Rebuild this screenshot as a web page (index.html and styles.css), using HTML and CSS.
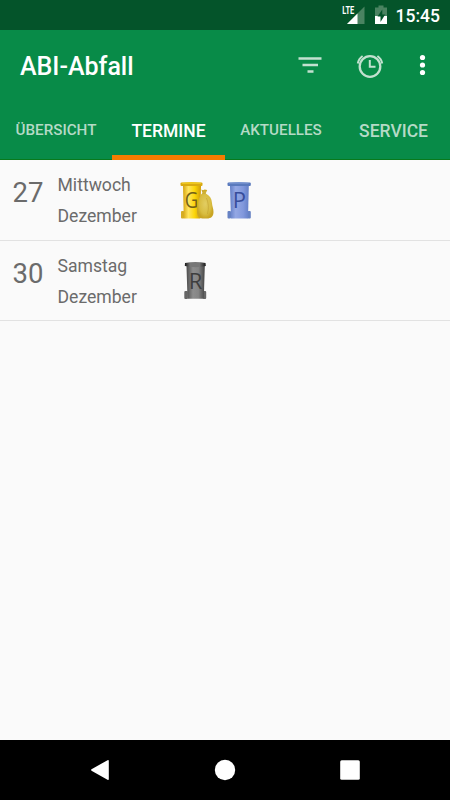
FILE: index.html
```html
<!DOCTYPE html>
<html lang="de">
<head>
<meta charset="utf-8">
<title>ABI-Abfall</title>
<link rel="stylesheet" href="styles.css">
</head>
<body>
<div class="screen">
  <div class="status">
    <svg class="status-icons" width="54" height="30" viewBox="0 0 54 30">
      <path d="M28.500 6.500v17.500H11z" fill="#4a8361"/>
      <path d="M21.500 13.500V24H11z" fill="#fff"/>
      <text class="lte" x="6.300" y="14" textLength="12" lengthAdjust="spacingAndGlyphs">LTE</text>
      <path d="M39 7.500h3.500V5.500h5v2H51v9H39z" fill="#4a8361"/>
      <path d="M39 16h12v8H39z" fill="#fff"/>
      <path d="M46.300 9.500l-4.800 7h3v5.500l4.700-7.500h-2.900z" fill="#04542a"/>
    </svg>
    <span class="clock">15:45</span>
  </div>
  <header class="bar">
    <h1>ABI-Abfall</h1>
    <svg class="actions" width="150" height="70" viewBox="0 0 150 70">
      <g fill="#c2e1cf">
        <path d="M-1.500 27.300h23v2.500h-23zM2.500 33.800h15.500v2.500H2.500zM7.500 40.200h6v2.500h-6z"/>
      </g>
      <g fill="none" stroke="#c2e1cf">
        <circle cx="70" cy="36.500" r="10.300" stroke-width="2.300"/>
        <path d="M69.800 30v6.700h5.700" stroke-width="2"/>
        <path d="M57.800 33.500c.5-3.200 2.200-5.700 4.800-7.500M82.200 33.500c-.5-3.200-2.200-5.700-4.800-7.500" stroke-width="2"/>
      </g>
      <g fill="#fff"><circle cx="122.500" cy="27.500" r="2.600"/><circle cx="122.500" cy="35" r="2.600"/><circle cx="122.500" cy="42.500" r="2.600"/></g>
    </svg>
  </header>
  <nav class="tabs">
    <span class="tab small">ÜBERSICHT</span>
    <span class="tab active">TERMINE</span>
    <span class="tab small">AKTUELLES</span>
    <span class="tab">SERVICE</span>
  </nav>
  <main class="list">
    <div class="row">
      <span class="day">27</span>
      <div class="date"><span>Mittwoch</span><span>Dezember</span></div>
      <svg class="bins" width="82" height="80" viewBox="0 0 82 80">
        <defs>
          <linearGradient id="yellow"><stop offset="0" stop-color="#d6a510"/><stop offset=".3" stop-color="#ffe560"/><stop offset=".65" stop-color="#fcd608"/><stop offset="1" stop-color="#cf9b08"/></linearGradient>
          <linearGradient id="blue"><stop offset="0" stop-color="#6480c8"/><stop offset=".3" stop-color="#94a8e4"/><stop offset=".7" stop-color="#8198dc"/><stop offset="1" stop-color="#6480c8"/></linearGradient>
          <radialGradient id="bag"><stop offset="0" stop-color="#e2cd62"/><stop offset=".7" stop-color="#d8bd40"/><stop offset="1" stop-color="#c9a524"/></radialGradient>
        </defs>
        <g>
          <rect x="11" y="51" width="3.200" height="7.500" rx="1" fill="#d5ad26"/>
          <path d="M13 26h18l-.8 32.500H13.800z" fill="url(#yellow)"/>
          <rect x="10.500" y="22.500" width="22" height="3.500" rx="1" fill="#d9aa11"/>
          <path d="M12 22.700q10-1.500 19 0v1.200H12z" fill="#edc61e"/>
          <text class="mark" x="14.800" y="48" textLength="13.500" lengthAdjust="spacingAndGlyphs" fill="#736118">G</text>
          <path d="M31.300 29.500l1.700.7 1.700-.7 2.500.5-1.500 3.500c4 2 6 5 6.200 9 .3 4 1.600 6 1.600 9.500 0 4.500-2.500 6.500-6.500 6.500h-4.500c-4 0-5.500-3-5.500-7 0-5 1-8 1.500-11 .6-3 2-6 4-7.500z" fill="url(#bag)"/>
          <path d="M32.300 33.300h3.500M36.500 38c2 5 2.500 10 1 16" fill="none" stroke="#bf9f30" stroke-width=".6"/>
        </g>
        <g>
          <rect x="57.500" y="51" width="3.500" height="7.500" rx="1" fill="#6682c3"/>
          <rect x="77.500" y="51" width="3.300" height="7.500" rx="1" fill="#6682c3"/>
          <path d="M60 26h18.800L78 58.500H61z" fill="url(#blue)"/>
          <rect x="57.500" y="22.500" width="23.300" height="3.500" rx="1" fill="#5a7abd"/>
          <path d="M59 22.700q10-1.500 19.500 0v1H59z" fill="#7895d1"/>
          <text class="mark" x="62.800" y="47.500" fill="#374d9b">P</text>
        </g>
      </svg>
    </div>
    <div class="row second">
      <span class="day">30</span>
      <div class="date"><span>Samstag</span><span>Dezember</span></div>
      <svg class="bins" width="80" height="80" viewBox="0 0 80 80">
        <defs>
          <linearGradient id="grey"><stop offset="0" stop-color="#4d4d4d"/><stop offset=".35" stop-color="#8d8d8d"/><stop offset=".65" stop-color="#858585"/><stop offset="1" stop-color="#454545"/></linearGradient>
          <linearGradient id="lid"><stop offset="0" stop-color="#151515"/><stop offset=".25" stop-color="#777"/><stop offset=".7" stop-color="#777"/><stop offset="1" stop-color="#151515"/></linearGradient>
        </defs>
        <rect x="14.300" y="50" width="3.500" height="8" rx="1" fill="#666"/>
        <rect x="33" y="50" width="3.200" height="8" rx="1" fill="#666"/>
        <path d="M16.500 25h18.300L33.800 57.700H17.500z" fill="url(#grey)"/>
        <path d="M15 22q10.500-2.200 20.500 0l.3 3q-10 2.300-21 0z" fill="url(#lid)"/>
        <text class="mark" x="18.800" y="48" fill="#3e3e3e">R</text>
      </svg>
    </div>
  </main>
  <footer class="navbar">
    <svg width="450" height="60" viewBox="0 0 450 60" fill="#fff">
      <path d="M91.500 29.300L107.500 20.200q1.300-.6 1.300.7v18.200q0 1.300-1.300.7L91.500 30.700q-.8-.7 0-1.400z"/>
      <circle cx="225" cy="30" r="10.200"/>
      <rect x="340.200" y="20.200" width="19.600" height="19.600" rx="1.500"/>
    </svg>
  </footer>
</div>
</body>
</html>
```

FILE: styles.css
```css
body {
  margin: 0;
  font-family: Roboto, "Liberation Sans", sans-serif;
}
svg { display: block; flex: none; }
.screen {
  width: 450px;
  height: 800px;
  display: flex;
  flex-direction: column;
  background: #fafafa;
  overflow: hidden;
}
.status {
  height: 30px;
  background: #04542a;
  display: flex;
  justify-content: flex-end;
  color: #fff;
}
.status-icons { margin-right: 6px; }
.lte {
  font: 700 10.5px Roboto, sans-serif;
  fill: #fff;
}
.clock {
  width: 54.5px;
  font-size: 17.5px;
  font-weight: 500;
  line-height: 32px;
}
.bar {
  height: 70px;
  background: #088b48;
  color: #fff;
  display: flex;
  justify-content: space-between;
}
.bar h1 {
  margin: 0 0 0 20px;
  font-size: 25px;
  font-weight: 500;
  line-height: 73px;
}
.actions { overflow: visible; }
.tabs {
  height: 60px;
  box-sizing: border-box;
  background: #088b48;
  display: grid;
  grid-template-columns: 112px 113px 112px 113px;
  box-shadow: inset 0 -1px #087a1c;
}
.tab {
  box-sizing: border-box;
  height: 60px;
  font-size: 17.5px;
  font-weight: 500;
  line-height: 62px;
  text-align: center;
  color: #b5dac6;
}
.small { font-size: 15.2px; line-height: 61px; }
.active { color: #fff; border-bottom: 5px solid #f57c00; }
.list { flex: 1; }
.row {
  height: 81px;
  box-sizing: border-box;
  border-bottom: 1px solid #e2e2e2;
  display: flex;
  color: #6b6b6b;
}
.second { height: 80px; }
.day {
  width: 45px;
  padding-left: 12.5px;
  font-size: 27.5px;
  line-height: 65px;
}
.date {
  width: 112.5px;
  padding-top: 10px;
  display: flex;
  flex-direction: column;
  font-size: 17.6px;
  line-height: 31px;
}
.mark { font: 22px "Open Sans", sans-serif; }
.navbar { height: 60px; background: #000; }
```
